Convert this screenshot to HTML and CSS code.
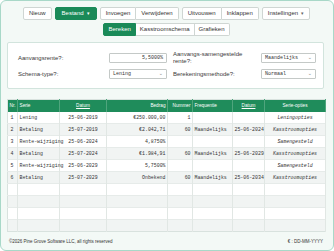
FILE: index.html
```html
<!DOCTYPE html>
<html>
<head>
<meta charset="utf-8">
<link rel="stylesheet" href="styles.css">
</head>
<body>
<div class="frame">
  <div class="toolbar">
    <div class="row">
      <button class="btn">Nieuw</button>
      <button class="btn primary">Bestand <span class="caret">▾</span></button>
      <div class="group">
        <button class="btn">Invoegen</button><button class="btn">Verwijderen</button>
      </div>
      <div class="group">
        <button class="btn">Uitvouwen</button><button class="btn">Inklappen</button>
      </div>
      <button class="btn">Instellingen <span class="caret dark">▾</span></button>
    </div>
    <div class="row">
      <div class="group">
        <button class="btn primary tab">Bereken</button><button class="btn tab">Kasstroomschema</button><button class="btn tab">Grafieken</button>
      </div>
    </div>
  </div>

  <div class="panel">
    <div class="col left">
      <div class="field">
        <span class="label">Aanvangsrente?:</span>
        <span class="input num">5,5000%</span>
      </div>
      <div class="field">
        <span class="label">Schema-type?:</span>
        <span class="input select">Lening<span class="chev">⌄</span></span>
      </div>
    </div>
    <div class="col right">
      <div class="field">
        <span class="label">Aanvangs-samengestelde<br>rente?:</span>
        <span class="input select">Maandelijks<span class="chev">⌄</span></span>
      </div>
      <div class="field">
        <span class="label">Berekeningsmethode?:</span>
        <span class="input select">Normaal<span class="chev">⌄</span></span>
      </div>
    </div>
  </div>

  <table class="grid">
    <colgroup>
      <col class="c-nr"><col class="c-serie"><col class="c-datum"><col class="c-bedrag">
      <col class="c-nummer"><col class="c-freq"><col class="c-datum2"><col class="c-opties">
    </colgroup>
    <thead>
      <tr>
        <th class="l">Nr.</th><th class="l">Serie</th><th class="c u">Datum</th><th class="r">Bedrag</th>
        <th class="r">Nummer</th><th class="l">Frequentie</th><th class="c u">Datum</th><th class="c">Serie-opties</th>
      </tr>
    </thead>
    <tbody>
      <tr><td>1</td><td>Lening</td><td class="c">25-06-2019</td><td class="r">€250.000,00</td><td class="r">1</td><td></td><td></td><td class="c i">Leningopties</td></tr>
      <tr><td>2</td><td>Betaling</td><td class="c">25-07-2019</td><td class="r">€2.042,71</td><td class="r">60</td><td>Maandelijks</td><td class="c">25-06-2024</td><td class="c i">Kasstroomopties</td></tr>
      <tr><td>3</td><td>Rente-wijziging</td><td class="c">25-06-2024</td><td class="r">4,8750%</td><td></td><td></td><td></td><td class="c i">Samengesteld</td></tr>
      <tr><td>4</td><td>Betaling</td><td class="c">25-07-2024</td><td class="r">€1.984,91</td><td class="r">60</td><td>Maandelijks</td><td class="c">25-06-2029</td><td class="c i">Kasstroomopties</td></tr>
      <tr><td>5</td><td>Rente-wijziging</td><td class="c">25-06-2029</td><td class="r">5,7500%</td><td></td><td></td><td></td><td class="c i">Samengesteld</td></tr>
      <tr><td>6</td><td>Betaling</td><td class="c">25-07-2029</td><td class="r">Onbekend</td><td class="r">60</td><td>Maandelijks</td><td class="c">25-06-2034</td><td class="c i">Kasstroomopties</td></tr>
      <tr><td></td><td></td><td></td><td></td><td></td><td></td><td></td><td></td></tr>
      <tr><td></td><td></td><td></td><td></td><td></td><td></td><td></td><td></td></tr>
      <tr><td></td><td></td><td></td><td></td><td></td><td></td><td></td><td></td></tr>
      <tr><td></td><td></td><td></td><td></td><td></td><td></td><td></td><td></td></tr>
    </tbody>
  </table>

  <div class="footer">
    <span>©2026 Pine Grove Software LLC, all rights reserved</span>
    <span>€ : DD-MM-YYYY</span>
  </div>
</div>
</body>
</html>
```

FILE: styles.css
```css
* { box-sizing: border-box; }
html, body { margin: 0; padding: 0; background: #ffffff; }
body { width: 334px; height: 251px; font-family: "Liberation Sans", Arial, sans-serif; }

.frame {
  width: 334px;
  height: 251px;
  border: 1px solid #a8d8c8;
  border-radius: 6px;
  background: #f3f9f6;
  padding: 6px 9px 0 6px;
  display: flex;
  flex-direction: column;
}

.toolbar { display: flex; flex-direction: column; gap: 3px; }
.row { display: flex; justify-content: center; gap: 3px; padding-left: 2px; }
.group { display: flex; }

.btn {
  font-family: "Liberation Sans", Arial, sans-serif;
  font-size: 6px;
  color: #333;
  background: #fff;
  border: 1px solid #cfd6d3;
  border-radius: 2px;
  height: 13px;
  padding: 0 5px;
  margin: 0;
  line-height: 11px;
  display: flex;
  align-items: center;
  gap: 3px;
}
.group .btn { border-radius: 0; }
.group .btn:first-child { border-radius: 2px 0 0 2px; }
.group .btn:last-child { border-radius: 0 2px 2px 0; }
.group .btn + .btn { border-left: none; }
.btn.primary { background: #1a8a58; border-color: #1a8a58; color: #fff; padding: 0 6px; }
.caret { font-size: 5px; color: #fff; }
.caret.dark { color: #666; }
.btn.tab { height: 13px; padding: 0 4px; }

.panel {
  margin-top: 6px;
  height: 47px;
  background: #fff;
  border: 1px solid #d2e4dd;
  border-radius: 2px;
  display: flex;
  padding: 10px 0 0 10px;
  gap: 6px;
}
.col { display: flex; flex-direction: column; gap: 6px; }
.col.left { width: 149px; }
.col.right { width: 144px; }
.field { display: flex; align-items: center; height: 10px; }
.label { font-size: 6px; color: #3a3a3a; line-height: 7px; }
.left .label { width: 91px; }
.right .label { width: 88px; }
.input {
  height: 10px;
  border: 1px solid #c4c9c7;
  border-radius: 1px;
  background: #fff;
  font-family: "Liberation Mono", "Courier New", monospace;
  font-size: 5px;
  color: #333;
  display: flex;
  align-items: center;
  padding: 0 3px;
}
.left .input { width: 58px; }
.right .input { width: 55px; }
.input.num { justify-content: flex-end; }
.input.select { justify-content: space-between; }
.chev { font-family: "DejaVu Sans", sans-serif; font-size: 5px; color: #777; line-height: 3px; margin-top: -2px; }

.grid {
  margin-top: 10px;
  width: 318px;
  border-collapse: collapse;
  table-layout: fixed;
  background: #fff;
  border: 1px solid #d8e2de;
}
.c-nr { width: 10px; }
.c-serie { width: 42px; }
.c-datum { width: 47px; }
.c-bedrag { width: 61px; }
.c-nummer { width: 25px; }
.c-freq { width: 40px; }
.c-datum2 { width: 32px; }
.c-opties { width: 61px; }

.grid th {
  background: #1f8c5b;
  color: #fff;
  font-weight: normal;
  font-size: 4.7px;
  height: 12px;
  padding: 0 1.5px;
  border-right: 1px solid #4fa57d;
  white-space: nowrap;
  overflow: hidden;
}
.grid td {
  font-family: "Liberation Mono", "Courier New", monospace;
  font-size: 4.9px;
  color: #333;
  height: 12px;
  padding: 0 1.5px;
  border-right: 1px solid #e1e7e4;
  white-space: nowrap;
}
.grid td:first-child { padding-left: 2.5px; }
.grid tbody tr:nth-child(even) td { background: #f1f4f3; }
.grid tbody tr + tr td { border-top: 1px solid #e6ebe9; }
.l { text-align: left; }
.c { text-align: center; }
.r { text-align: right; }
.u { text-decoration: underline; }
.i { font-style: italic; }

.footer {
  flex: 1;
  display: flex;
  align-items: center;
  justify-content: space-between;
  font-size: 4.5px;
  color: #333;
  padding: 0 1px 0 2px;
}
```
